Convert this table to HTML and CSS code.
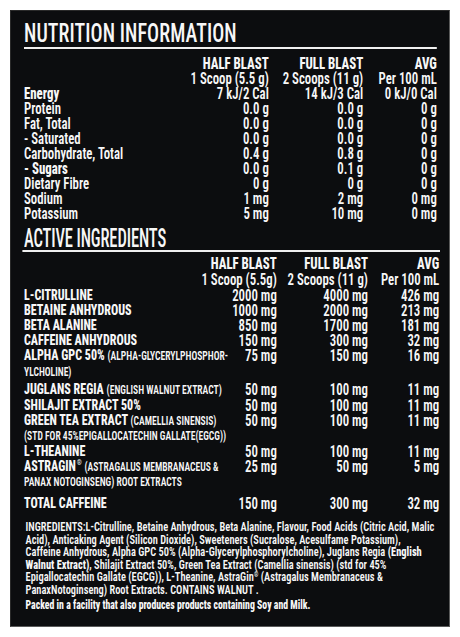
FILE: index.html
```html
<!DOCTYPE html>
<html>
<head>
<meta charset="utf-8">
<link rel="stylesheet" href="styles.css">
</head>
<body>
<div class="card">
  <div class="sq">
    <h2 class="title t1">NUTRITION INFORMATION</h2>
    <div class="tbl nut">
      <div></div><div class="v hd">HALF BLAST</div><div class="v hd">FULL BLAST</div><div class="v hd">AVG</div>
      <div></div><div class="v">1 Scoop (5.5 g)</div><div class="v">2 Scoops (11 g)</div><div class="v">Per 100 mL</div>
      <div class="l b">Energy</div><div class="v">7 kJ/2 Cal</div><div class="v">14 kJ/3 Cal</div><div class="v">0 kJ/0 Cal</div>
      <div class="l">Protein</div><div class="v">0.0 g</div><div class="v">0.0 g</div><div class="v">0 g</div>
      <div class="l">Fat, Total</div><div class="v">0.0 g</div><div class="v">0.0 g</div><div class="v">0 g</div>
      <div class="l">- Saturated</div><div class="v">0.0 g</div><div class="v">0.0 g</div><div class="v">0 g</div>
      <div class="l">Carbohydrate, Total</div><div class="v">0.4 g</div><div class="v">0.8 g</div><div class="v">0 g</div>
      <div class="l b">- Sugars</div><div class="v">0.0 g</div><div class="v">0.1 g</div><div class="v">0 g</div>
      <div class="l">Dietary Fibre</div><div class="v">0 g</div><div class="v">0 g</div><div class="v">0 g</div>
      <div class="l">Sodium</div><div class="v">1 mg</div><div class="v">2 mg</div><div class="v">0 mg</div>
      <div class="l">Potassium</div><div class="v">5 mg</div><div class="v">10 mg</div><div class="v">0 mg</div>
    </div>

    <h2 class="title t2"><span class="tt">ACTIVE INGREDIENTS</span></h2>
    <div class="tbl act">
      <div></div><div class="v hd">HALF BLAST</div><div class="v hd">FULL BLAST</div><div class="v hd">AVG</div>
      <div class="h2row"></div><div class="v h2row">1 Scoop (5.5g)</div><div class="v h2row">2 Scoops (11 g)</div><div class="v h2row">Per 100 mL</div>
      <div class="l cap">L-CITRULLINE</div><div class="v">2000 mg</div><div class="v">4000 mg</div><div class="v">426 mg</div>
      <div class="l cap">BETAINE ANHYDROUS</div><div class="v">1000 mg</div><div class="v">2000 mg</div><div class="v">213 mg</div>
      <div class="l cap">BETA ALANINE</div><div class="v">850 mg</div><div class="v">1700 mg</div><div class="v">181 mg</div>
      <div class="l cap">CAFFEINE ANHYDROUS</div><div class="v">150 mg</div><div class="v">300 mg</div><div class="v">32 mg</div>
      <div class="l cap">ALPHA GPC 50% <span class="sm">(ALPHA-GLYCERYLPHOSPHOR-</span><div class="sub gap">YLCHOLINE)</div></div><div class="v">75 mg</div><div class="v">150 mg</div><div class="v">16 mg</div>
      <div class="l cap">JUGLANS REGIA <span class="sm">(ENGLISH WALNUT EXTRACT)</span></div><div class="v">50 mg</div><div class="v">100 mg</div><div class="v">11 mg</div>
      <div class="l cap">SHILAJIT EXTRACT 50%</div><div class="v">50 mg</div><div class="v">100 mg</div><div class="v">11 mg</div>
      <div class="l cap">GREEN TEA EXTRACT <span class="sm">(CAMELLIA SINENSIS)</span><div class="sub">(STD FOR 45%EPIGALLOCATECHIN GALLATE(EGCG))</div></div><div class="v">50 mg</div><div class="v">100 mg</div><div class="v">11 mg</div>
      <div class="l cap">L-THEANINE</div><div class="v">50 mg</div><div class="v">100 mg</div><div class="v">11 mg</div>
      <div class="l cap">ASTRAGIN<sup class="reg">®</sup> <span class="sm">(ASTRAGALUS MEMBRANACEUS &amp;</span><div class="sub">PANAX NOTOGINSENG) ROOT EXTRACTS</div></div><div class="v">25 mg</div><div class="v">50 mg</div><div class="v">5 mg</div>
      <div class="l cap total">TOTAL CAFFEINE</div><div class="v total">150 mg</div><div class="v total">300 mg</div><div class="v total">32 mg</div>
    </div>

    <p class="ingr">INGREDIENTS:L-Citrulline, Betaine Anhydrous, Beta Alanine, Flavour, Food Acids (Citric Acid, Malic<br>Acid), Anticaking Agent (Silicon Dioxide), Sweeteners (Sucralose, Acesulfame Potassium),<br>Caffeine Anhydrous, Alpha GPC 50% (Alpha-Glycerylphosphorylcholine), Juglans Regia <b>(English</b><br><b>Walnut Extract)</b>, Shilajit Extract 50%, Green Tea Extract (Camellia sinensis) (std for 45%<br>Epigallocatechin Gallate (EGCG)), L-Theanine, AstraGin<sup class="reg2">®</sup> (Astragalus Membranaceus &amp;<br>PanaxNotoginseng) Root Extracts. CONTAINS WALNUT .</p>
    <p class="packed">Packed in a facility that also produces products containing Soy and Milk.</p>
  </div>
</div>
</body>
</html>
```
FILE: styles.css
```css
html, body {
  margin: 0;
  padding: 0;
  background: #ffffff;
}

.card {
  margin: 10px 0 0 10px;
  width: 440px;
  height: 617px;
  box-sizing: border-box;
  background: #0c0d0f;
  border: 1px solid #5a5a5a;
  border-top-color: #2a2a2a;
  border-left-color: #2a2a2a;
  overflow: hidden;
  color: #f7f7f7;
  font-family: Roboto, "Roboto Condensed", sans-serif;
  font-stretch: 75%;
}

.sq {
  width: 520px;
  margin-left: 13px;
  padding-top: 11.3px;
  transform: scaleX(0.8);
  transform-origin: 0 0;
}

.title {
  margin: 0;
  font-size: 25px;
  line-height: 23px;
  font-weight: 500;
  letter-spacing: 0.1px;
  border-bottom: 2px solid #f0f0f0;
}

.t1 {
  width: 516px;
  padding-bottom: 1.5px;
}

.t2 {
  width: 520px;
  margin-top: 6px;
  margin-left: -2px;
  padding-left: 2px;
}

.tt {
  display: inline-block;
  transform: scaleX(0.83);
  transform-origin: 0 0;
  letter-spacing: -0.2px;
}

.tbl {
  display: grid;
  font-size: 16px;
  line-height: 15px;
  font-weight: 600;
}

.nut {
  width: 516px;
  margin-top: 7px;
  grid-template-columns: 186px 120px 118px 92px;
}

.act {
  width: 519px;
  margin-top: 4.2px;
  grid-template-columns: 262px 54px 114px 89px;
}

.v {
  justify-self: end;
  white-space: nowrap;
}

.l {
  white-space: nowrap;
}

.hd {
  font-weight: 800;
  font-size: 16px;
}

.b {
  font-weight: 800;
}

.h2row {
  line-height: 17px;
}

.cap {
  font-weight: 800;
  font-size: 15px;
}

.sm {
  font-size: 12px;
  font-weight: 600;
}

.sub {
  font-size: 12px;
  font-weight: 600;
  line-height: 15px;
}

.sub.gap {
  line-height: 16px;
  margin-bottom: 2.4px;
}

.reg {
  font-size: 8px;
  font-weight: 500;
  vertical-align: 6px;
  line-height: 0;
  margin-left: 1px;
}

.total {
  margin-top: 6px;
}

.ingr {
  margin: 10px 0 0 2px;
  font-size: 13px;
  line-height: 12.5px;
  font-weight: 600;
  white-space: nowrap;
}

.ingr b {
  font-weight: 800;
}

.reg2 {
  font-size: 7px;
  vertical-align: 4px;
  line-height: 0;
}

.packed {
  margin: 3px 0 0 2px;
  font-size: 12.2px;
  line-height: 12.5px;
  font-weight: 800;
  white-space: nowrap;
}
```
